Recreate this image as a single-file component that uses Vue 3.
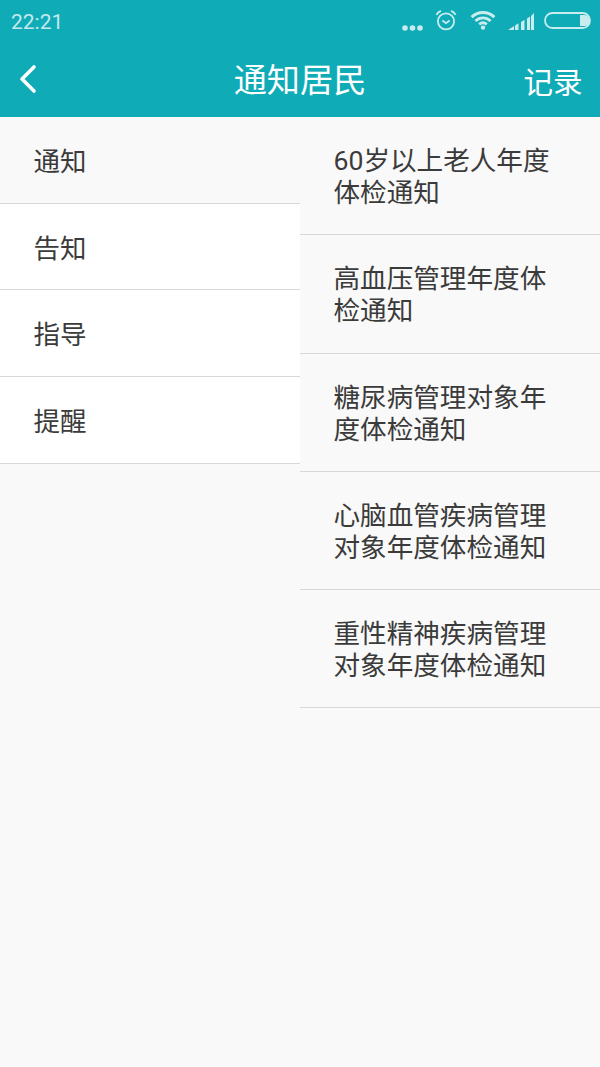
<script setup>
const categories = [
  { name: '通知', active: true },
  { name: '告知' },
  { name: '指导' },
  { name: '提醒' }
]

const notices = [
  '60岁以上老人年度体检通知',
  '高血压管理年度体检通知',
  '糖尿病管理对象年度体检通知',
  '心脑血管疾病管理对象年度体检通知',
  '重性精神疾病管理对象年度体检通知'
]
</script>

<template>
  <div class="page">
    <header class="header">
      <div class="status">
        <span class="time">22:21</span>
        <div class="status-icons">
          <svg class="dots" width="21" height="6" viewBox="0 0 21 6">
            <circle cx="3" cy="3" r="2.8" />
            <circle cx="10.5" cy="3" r="2.8" />
            <circle cx="18" cy="3" r="2.8" />
          </svg>
          <svg class="alarm" width="22" height="22" viewBox="0 0 24 24" fill="none">
            <circle cx="12" cy="13.5" r="8.800" />
            <path d="M8 12.500l4 3 4-3" />
            <path d="M1.500 6.500c1-2 2.500-3.500 5-4.500M22.500 6.500c-1-2-2.500-3.500-5-4.500" />
          </svg>
          <svg class="wifi" width="26" height="20" viewBox="0 0 27 21" fill="none">
            <path d="M1.500 7.500c7-6.500 17-6.500 24 0" />
            <path d="M5.500 11.500c4.800-4.300 11.200-4.300 16 0" />
            <path d="M9.500 15c2.500-2 5.500-2 8 0" />
            <circle cx="13.500" cy="18.500" r="2.300" />
          </svg>
          <svg class="signal" width="26" height="17" viewBox="0 0 26 17">
            <path d="M0 17l6-4v4zM7 12.500l3.500-2.300V17H7zM13 9l3.500-2.300V17H13zM19 5.500l3-2V17h-3zM23 3l3-3v17h-3z" />
          </svg>
          <svg class="battery" width="47" height="17" viewBox="0 0 47 17" fill="none">
            <rect x="1" y="1" width="45" height="15" rx="7.500" />
            <path class="level" d="M36 3h4.500a5.500 5.500 0 0 1 0 11H36z" />
          </svg>
        </div>
      </div>
      <div class="toolbar">
        <svg class="back" width="20" height="30" viewBox="0 0 20 30" fill="none">
          <path d="M16 3L4 15l12 12" />
        </svg>
        <h1 class="title">通知居民</h1>
        <span class="record">记录</span>
      </div>
    </header>

    <main class="content">
      <ul class="categories">
        <li
          v-for="item in categories"
          :key="item.name"
          class="category"
          :class="{ active: item.active }"
        >
          {{ item.name }}
        </li>
      </ul>
      <ul class="notices">
        <li v-for="text in notices" :key="text" class="notice">{{ text }}</li>
      </ul>
    </main>
  </div>
</template>

<style>
html,
body {
  margin: 0;
  background: #f9f9f9;
}
</style>

<style scoped>
.page {
  width: 600px;
  height: 1067px;
  display: flex;
  flex-direction: column;
  overflow: hidden;
  background: #f9f9f9;
  font-family: Roboto, "Noto Sans CJK SC", sans-serif;
}

.header {
  height: 117px;
  flex: none;
  background: #0fabb7;
  color: #fff;
}

.status {
  height: 44px;
  display: flex;
  align-items: flex-start;
  justify-content: space-between;
  box-sizing: border-box;
  padding: 9px 9px 0 11px;
}

.time {
  font-size: 21px;
  line-height: 26px;
  color: #c4e9ed;
}

.status-icons {
  display: flex;
  align-items: flex-end;
  gap: 12px;
  height: 22px;
}

.dots {
  fill: #c9ecef;
}

.alarm {
  stroke: #c9ecef;
  stroke-width: 2;
}

.wifi {
  stroke: #c9ecef;
  stroke-width: 3;
  margin-left: 1px;
  margin-bottom: 1px;
}

.wifi circle {
  fill: #c9ecef;
  stroke: none;
}

.signal {
  fill: #c9ecef;
  margin-bottom: 1px;
}

.battery {
  stroke: #c9ecef;
  stroke-width: 1.800;
  margin: 0 0 2px -2px;
}

.level {
  fill: #c9ecef;
  stroke: none;
}

.toolbar {
  height: 73px;
  box-sizing: border-box;
  display: flex;
  align-items: center;
  justify-content: space-between;
  position: relative;
  padding: 0 17.500px 0 18px;
}

.back {
  stroke: #fff;
  stroke-width: 3.600;
  stroke-linecap: round;
  stroke-linejoin: round;
  margin-bottom: 3px;
}

.title {
  position: absolute;
  left: 0;
  right: 0;
  margin: 0;
  text-align: center;
  font-size: 33.200px;
  font-weight: 400;
  line-height: 72px;
}

.record {
  font-size: 29.500px;
  margin-bottom: 2px;
}

.content {
  flex: 1;
  display: grid;
  grid-template-columns: 300px 300px;
  align-items: start;
}

.categories,
.notices {
  margin: 0;
  padding: 0;
  list-style: none;
}

.category {
  height: 85.670px;
  line-height: 89px;
  padding-left: 33.500px;
  font-size: 26.500px;
  color: #3b3b3b;
  background: #fff;
  border-bottom: 1px solid #d8d8d8;
}

.category.active {
  background: #f9f9f9;
}

.notice {
  box-sizing: border-box;
  height: 118.300px;
  padding: 28px 44px 0 33.500px;
  font-size: 26.600px;
  line-height: 32px;
  color: #3b3b3b;
  border-bottom: 1px solid #d8d8d8;
}
</style>
